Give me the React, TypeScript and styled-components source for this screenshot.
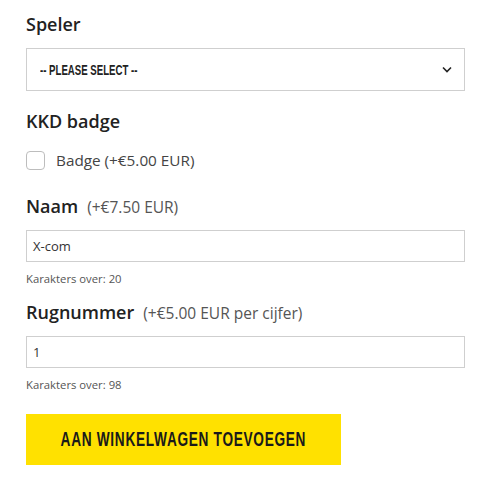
import styled, { createGlobalStyle } from 'styled-components';

const GlobalStyle = createGlobalStyle`
  body {
    margin: 0;
    background: #fff;
    font-family: "Open Sans", "Liberation Sans", sans-serif;
  }
`;

const Form = styled.form`
  width: 439px;
  padding: 12px 0 0 26px;
  display: flex;
  flex-direction: column;
`;

const Label = styled.div<{ $gap?: number }>`
  display: flex;
  align-items: baseline;
  gap: 9px;
  margin-top: ${(p) => p.$gap ?? 0}px;
  font-size: 18px;
  line-height: 24px;
  font-weight: 600;
  color: #222;
`;

const Price = styled.span`
  font-size: 15.5px;
  font-weight: 400;
  color: #555;
`;

// narrow display face stand-in: bold sans squeezed horizontally
const Condensed = styled.span<{ $scale: number }>`
  display: inline-block;
  font-family: "Liberation Sans", Arial, sans-serif;
  font-weight: 700;
  transform: scaleX(${(p) => p.$scale});
  transform-origin: left center;
  white-space: nowrap;
`;

const SelectBox = styled.div`
  margin-top: 12px;
  height: 43px;
  box-sizing: border-box;
  border: 1px solid #cfcfcf;
  display: flex;
  align-items: center;
  justify-content: space-between;
  padding: 0 12px 0 13px;
  font-size: 15.3px;
  color: #222;
`;

const CheckRow = styled.label`
  margin-top: 17px;
  display: flex;
  align-items: center;
  gap: 11px;
  height: 20px;
  font-size: 15.3px;
  color: #444;
`;

const Box = styled.span`
  width: 19px;
  height: 19px;
  box-sizing: border-box;
  border: 1px solid #bdbdbd;
  border-radius: 4px;
  background: #fff;
`;

const Input = styled.div`
  margin-top: 11px;
  height: 32px;
  box-sizing: border-box;
  border: 1px solid #cfcfcf;
  display: flex;
  align-items: center;
  padding: 0 6px;
  font-size: 13px;
  color: #333;
`;

const Hint = styled.div`
  margin-top: 9px;
  font-size: 11.3px;
  line-height: 15px;
  color: #555;
`;

const Button = styled.button`
  margin-top: 22px;
  width: 315px;
  height: 51px;
  border: none;
  padding: 0;
  background: #ffe100;
  color: #1a1a1a;
  font-size: 19.5px;
  display: flex;
  align-items: center;
  justify-content: center;
  cursor: pointer;
`;

const ButtonText = styled(Condensed)`
  transform-origin: center center;
  letter-spacing: 1px;
`;

const Chevron = () => (
  <svg width="10" height="7" viewBox="0 0 10 7">
    <path d="M1 1.5 L5 5.5 L9 1.5" fill="none" stroke="#222" strokeWidth="1.6" />
  </svg>
);

export default function App() {
  return (
    <>
      <GlobalStyle />
      <Form>
        <Label>Speler</Label>
        <SelectBox>
          <Condensed $scale={0.63}>-- PLEASE SELECT --</Condensed>
          <Chevron />
        </SelectBox>

        <Label $gap={18}>KKD badge</Label>
        <CheckRow>
          <Box />
          Badge (+€5.00 EUR)
        </CheckRow>

        <Label $gap={24}>
          Naam <Price>(+€7.50 EUR)</Price>
        </Label>
        <Input>X-com</Input>
        <Hint>Karakters over: 20</Hint>

        <Label $gap={14}>
          Rugnummer <Price>(+€5.00 EUR per cijfer)</Price>
        </Label>
        <Input>1</Input>
        <Hint>Karakters over: 98</Hint>

        <Button type="button">
          <ButtonText $scale={0.7}>AAN WINKELWAGEN TOEVOEGEN</ButtonText>
        </Button>
      </Form>
    </>
  );
}
